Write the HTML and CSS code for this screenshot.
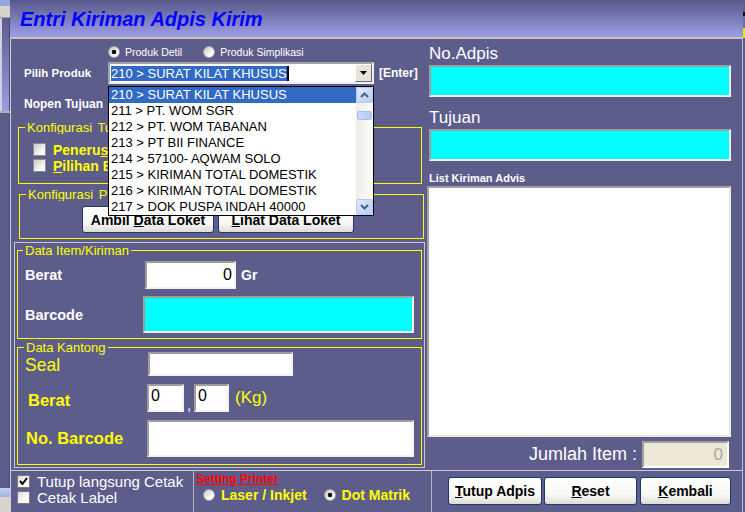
FILE: index.html
```html
<!DOCTYPE html>
<html lang="id">
<head>
<meta charset="utf-8">
<title>Entri Kiriman Adpis Kirim</title>
<link rel="stylesheet" href="styles.css">
</head>
<body>
<div class="screen">
  <div class="strip">
    <div class="strip-top"></div>
    <div class="strip-title"></div>
    <div class="strip-mid"></div>
    <div class="strip-task"></div>
    <div class="strip-bottom"></div>
  </div>
  <div class="window">
    <header class="titlebar"><h1 class="title">Entri Kiriman Adpis Kirim</h1></header>
    <div class="body">
      <div class="left">
        <div class="radio-row">
          <span class="radio on"></span><span class="radio-lbl">Produk Detil</span>
          <span class="radio second"></span><span class="radio-lbl">Produk Simplikasi</span>
        </div>
        <div class="produk-row">
          <span class="lbl">Pilih Produk</span>
          <div class="combo">
            <div class="combo-text"><span class="combo-sel">210 &gt; SURAT KILAT KHUSUS</span><span class="caret"></span></div>
            <div class="combo-btn"><svg width="7" height="4" viewBox="0 0 7 4"><polygon points="0,0 7,0 3.5,4" fill="#000"/></svg></div>
            <div class="droplist">
              <div class="dl-items">
                <div class="dl-item sel">210 &gt; SURAT KILAT KHUSUS</div>
                <div class="dl-item">211 &gt; PT. WOM SGR</div>
                <div class="dl-item">212 &gt; PT. WOM TABANAN</div>
                <div class="dl-item">213 &gt; PT BII FINANCE</div>
                <div class="dl-item">214 &gt; 57100- AQWAM SOLO</div>
                <div class="dl-item">215 &gt; KIRIMAN TOTAL DOMESTIK</div>
                <div class="dl-item">216 &gt; KIRIMAN TOTAL DOMESTIK</div>
                <div class="dl-item">217 &gt; DOK PUSPA INDAH 40000</div>
              </div>
              <div class="dl-scroll">
                <div class="sb-btn"><svg width="9" height="6" viewBox="0 0 9 6"><polyline points="1,5 4.5,1.5 8,5" fill="none" stroke="#4d6185" stroke-width="2"/></svg></div>
                <div class="sb-track"><div class="sb-thumb"></div></div>
                <div class="sb-btn"><svg width="9" height="6" viewBox="0 0 9 6"><polyline points="1,1 4.5,4.5 8,1" fill="none" stroke="#4d6185" stroke-width="2"/></svg></div>
              </div>
            </div>
          </div>
          <span class="enter">[Enter]</span>
        </div>
        <div class="nopen-row"><span class="lbl nopen">Nopen Tujuan</span></div>
        <fieldset class="frame konf-t">
          <legend class="lg-konf">Konfigurasi Tujuan</legend>
          <div class="chk-row"><span class="chk"></span><span class="chk-lbl">Peneru<u>s</u>an</span></div>
          <div class="chk-row"><span class="chk"></span><span class="chk-lbl"><u>P</u>ilihan Barang</span></div>
        </fieldset>
        <fieldset class="frame konf-p">
          <legend class="lg-konf">Konfigurasi Proses</legend>
          <div class="btn-pair">
            <div class="btn ambil"><span>Ambil <u>D</u>ata Loket</span></div>
            <div class="btn lihat"><span><u>L</u>ihat Data Loket</span></div>
          </div>
        </fieldset>
        <div class="panel">
          <fieldset class="frame item">
            <legend>Data Item/Kiriman</legend>
            <div class="frow">
              <span class="flbl w120">Berat</span>
              <div class="inp berat-item">0</div>
              <span class="gr">Gr</span>
            </div>
            <div class="frow gap7">
              <span class="flbl w118">Barcode</span>
              <div class="inp cyan barcode-item"></div>
            </div>
          </fieldset>
          <fieldset class="frame kantong">
            <legend>Data Kantong</legend>
            <div class="frow seal-row">
              <span class="klbl seal">Seal</span>
              <div class="inp seal-inp"></div>
            </div>
            <div class="frow gap8">
              <span class="klbl kb berat-k">Berat</span>
              <div class="inp kg1">0</div>
              <span class="comma">,</span>
              <div class="inp kg2">0</div>
              <span class="kg">(Kg)</span>
            </div>
            <div class="frow gap8">
              <span class="klbl kb nobar">No. Barcode</span>
              <div class="inp nobar-inp"></div>
            </div>
          </fieldset>
        </div>
      </div>
      <div class="right">
        <div class="big-lbl">No.Adpis</div>
        <div class="inp cyan r-cyan"></div>
        <div class="big-lbl tujuan-lbl">Tujuan</div>
        <div class="inp cyan r-cyan"></div>
        <div class="list-lbl">List Kiriman Advis</div>
        <div class="listbox"></div>
        <div class="jumlah-row">
          <span class="jumlah-lbl">Jumlah Item :</span>
          <div class="jumlah-inp">0</div>
        </div>
      </div>
    </div>
    <div class="bottombar">
      <div class="bb-checks">
        <div class="bchk-row"><span class="bchk"><svg width="11" height="11" viewBox="0 0 11 11"><polyline points="2,5 4.5,8 9,2" fill="none" stroke="#000" stroke-width="2"/></svg></span><span class="bchk-lbl">Tutup langsung Cetak</span></div>
        <div class="bchk-row"><span class="bchk"></span><span class="bchk-lbl">Cetak Label</span></div>
      </div>
      <div class="bb-printer">
        <div class="setting">Setting Printer</div>
        <div class="prow">
          <span class="radio"></span><span class="p-lbl">Laser / Inkjet</span>
          <span class="radio on p-second"></span><span class="p-lbl">Dot Matrik</span>
        </div>
      </div>
      <div class="bb-buttons">
        <div class="btn b1"><span><u>T</u>utup Adpis</span></div>
        <div class="btn b2"><span><u>R</u>eset</span></div>
        <div class="btn b3"><span><u>K</u>embali</span></div>
      </div>
    </div>
  </div>
  <div class="edge"></div>
</div>
</body>
</html>
```

FILE: styles.css
```css
* { box-sizing: border-box; }
html, body { margin: 0; padding: 0; }
body {
  width: 745px; height: 512px; overflow: hidden;
  background: #5d5d8b;
  font-family: "Liberation Sans", Arial, sans-serif;
  color: #fff;
}
.screen { display: flex; width: 745px; height: 512px; }

/* fragment of the window behind, at the far left */
.strip { width: 10px; flex: none; display: flex; flex-direction: column; }
.strip-top { height: 18px; background: linear-gradient(#90a8dc 0 6px, #d6d3cc 6px); border-bottom: 1px solid #9a9a9a; }
.strip-title {
  height: 95px;
  background: linear-gradient(to right, #d0d0e0 0 2px, transparent 2px 9px, #4a4a74 9px),
              linear-gradient(#5c5c8c, #9c9ce6);
  border-bottom: 2px solid #b4b0a8;
}
.strip-mid { flex: 1; background: linear-gradient(to right, #5d5d8b 0 9px, #4e4e78 9px); }
.strip-task { height: 9px; background: linear-gradient(#c4d2ee, #9fb4e2); }
.strip-bottom { height: 15px; background: #d8d5ce; }

.window { width: 733px; flex: none; display: flex; flex-direction: column; }
.edge {
  width: 2px; flex: none;
  background: linear-gradient(#5d5d8b 0 12px, #111 12px 16px, #6c6ca0 16px 28px, #e8e800 28px 38px, #5d5d8b 38px);
}
.titlebar {
  height: 39px; flex: none;
  padding: 9px 0 0 10px;
  background: linear-gradient(#58588a, #9e9ee8);
  border-bottom: 2px solid #c8c4bb;
}
.title { margin: 0; font: italic bold 20px/20px "Liberation Sans", Arial, sans-serif; color: #0000ff; }

.body {
  height: 431px; flex: none; display: flex;
  border-left: 1px solid #cfcfdc; border-right: 1px solid #bdbdcc;
}
.left { width: 414px; flex: none; padding-top: 7px; }
.right { flex: 1; padding: 6px 0 0 4px; }

/* radios */
.radio-row { display: flex; align-items: center; height: 12px; padding-left: 97px; }
.radio {
  width: 12px; height: 12px; flex: none; border-radius: 50%;
  border: 1px solid #a4a4a4;
  background: linear-gradient(135deg, #c9c9c3, #fff 75%);
}
.radio.on {
  background: radial-gradient(circle at 50% 50%, #111 0 2px, transparent 2.6px), linear-gradient(135deg, #c9c9c3, #fff 75%);
}
.radio-lbl { font-size: 10.5px; margin-left: 5px; color: #fff; white-space: nowrap; }
.radio.second { margin-left: 21px; }

/* product row */
.produk-row { display: flex; align-items: center; height: 22px; margin-top: 4px; }
.lbl { width: 97px; flex: none; padding-left: 13px; font-weight: bold; font-size: 11.5px; white-space: nowrap; }
.lbl.nopen { font-size: 12px; }
.combo {
  position: relative; width: 266px; height: 22px; flex: none; display: flex;
  border: 2px solid; border-color: #a3a3a3 #efefef #efefef #a3a3a3;
  background: #fff;
}
.combo-text { flex: 1; display: flex; align-items: center; padding-left: 1px; }
.combo-sel { background: #316ac5; color: #fff; font-size: 13px; line-height: 15px; white-space: nowrap; }
.caret { width: 2px; height: 15px; background: #000; }
.combo-btn {
  width: 17px; height: 18px; flex: none;
  background: #e6e3da;
  border: 1px solid; border-color: #fff #6e6c64 #6e6c64 #fff;
  display: flex; align-items: center; justify-content: center;
}
.enter { margin-left: 5px; font-weight: bold; font-size: 12px; white-space: nowrap; }

.droplist {
  position: absolute; left: -2px; top: 22px; z-index: 10;
  width: 266px; height: 130px;
  border: 1px solid #000; background: #fff;
  display: flex;
}
.dl-items { flex: 1; }
.dl-item { height: 16px; line-height: 16px; font-size: 13px; color: #000; padding-left: 2px; white-space: nowrap; }
.dl-item.sel { background: #316ac5; color: #fff; }
.dl-scroll {
  width: 17px; flex: none; display: flex; flex-direction: column;
  background: linear-gradient(to right, #eeede6, #fdfdfb);
}
.sb-btn {
  height: 16px; flex: none;
  border: 1px solid #b5c8f4; border-radius: 2px;
  background: linear-gradient(135deg, #e2eafd, #b7cbf5);
  display: flex; align-items: center; justify-content: center;
}
.sb-track { flex: 1; padding-top: 8px; }
.sb-thumb {
  height: 9px; margin: 0 1px;
  border: 1px solid #a8bdf0; border-radius: 2px;
  background: linear-gradient(to right, #cbd9fb, #b5cbf8);
}

.nopen-row { display: flex; align-items: center; height: 20px; margin-top: 10px; }

/* frames (content inset is on the children so the legend stays at the frame's left) */
.frame { margin: 0; padding: 0; border: 1px solid #ffff00; min-width: 0; }
.frame legend {
  padding: 0 2px; margin-left: 5px;
  font-size: 13px; line-height: 13px; color: #ffff00; white-space: nowrap;
}
/* the parts of these captions that the open list covers are clipped at its left edge */
.frame .lg-konf { margin-left: 6px; padding-right: 0; word-spacing: 2px; max-width: 83px; overflow: hidden; }
.konf-t { margin: 7px 0 0 7px; width: 404px; padding: 9px 0 11px 0; }
.konf-t .chk-row { margin-left: 14px; }
.konf-p { margin: 4px 0 0 8px; width: 405px; padding: 5px 0 5px 0; }
.konf-p .lg-konf { max-width: 82px; }
.konf-p .btn-pair { margin-left: 62px; }

.chk-row { display: flex; align-items: center; height: 13px; }
.chk-row + .chk-row { margin-top: 3px; }
.chk {
  width: 13px; height: 13px; flex: none;
  border: 1px solid #8d8d8d;
  background: linear-gradient(135deg, #c9c9c5, #fff 80%);
}
.chk-lbl {
  margin-left: 7px; font-weight: bold; font-size: 14px; color: #ffff00; white-space: nowrap;
  max-width: 55px; overflow: hidden;
}

.btn-pair { display: flex; gap: 4px; }
.btn {
  height: 27px; flex: none;
  border: 1px solid #1b3b6e; border-radius: 3px;
  background: linear-gradient(#ffffff, #f7f7f4 65%, #dedcd4);
  font-weight: bold; font-size: 14px; color: #000;
  display: flex; align-items: center; justify-content: center; white-space: nowrap;
}
.ambil { width: 132px; }
.lihat { width: 136px; }

/* data panel */
.panel {
  margin: 3px 0 0 3px; width: 411px;
  border: 1px solid #c6c6d0;
  padding: 1px 0 2px 2px;
}
.item { width: 405px; padding: 4px 0 5px 0; }
.kantong { width: 405px; margin-top: 2px; padding: 0 0 7px 0; }
.kantong legend { margin-left: 6px; }
.item .frow, .kantong .frow { margin-left: 7px; }

.frow { display: flex; align-items: center; }
.gap7 { margin-top: 7px; }
.gap8 { margin-top: 8px; }
.flbl { flex: none; font-weight: bold; font-size: 14.5px; white-space: nowrap; }
.w120 { width: 120px; }
.w118 { width: 118px; }
.inp {
  flex: none; background: #fff;
  border: 2px solid; border-color: #9e9e9e #f2f2f2 #f2f2f2 #9e9e9e;
  color: #000;
}
.cyan { background: #00ffff; }
.berat-item {
  width: 91px; height: 28px;
  display: flex; align-items: center; justify-content: flex-end;
  padding-right: 2px; font-size: 16px;
}
.gr { margin-left: 5px; font-weight: bold; font-size: 14px; }
.barcode-item { width: 271px; height: 37px; }

.kantong .seal-row { margin-top: -3px; }
.klbl { flex: none; color: #ffff00; white-space: nowrap; align-self: stretch; display: flex; align-items: center; }
.seal { width: 123px; font-size: 17.5px; padding-top: 4px; }
.kb { font-weight: bold; font-size: 16.5px; }
.berat-k { width: 122px; padding-left: 3px; padding-top: 4px; }
.nobar { width: 122px; padding-left: 1px; }
.seal-inp { width: 145px; height: 24px; }
.kg1, .kg2 { height: 28px; font-size: 16px; line-height: 16px; padding: 2px 0 0 2px; }
.kg1 { width: 37px; }
.kg2 { width: 35px; }
.comma { width: 10px; text-align: center; align-self: flex-end; font-size: 15px; line-height: 15px; color: #fff; }
.kg { margin-left: 6px; font-size: 17px; color: #ffff00; }
.nobar-inp { width: 267px; height: 37px; }

/* right */
.big-lbl { font-size: 17px; line-height: 17px; }
.tujuan-lbl { margin-top: 12px; }
.r-cyan { width: 302px; height: 32px; margin-top: 3px; }
.list-lbl { font-size: 11px; line-height: 11px; font-weight: bold; margin-top: 12px; }
.listbox {
  margin: 2px 0 0 -2px; width: 304px; height: 251px;
  background: #fff;
  border: 2px solid; border-color: #a0a0a0 #ebe8dc #ebe8dc #a0a0a0;
}
.jumlah-row {
  display: flex; align-items: center; justify-content: flex-end;
  height: 27px; margin-top: 4px; padding-right: 13px;
}
.jumlah-lbl { font-size: 18px; margin-right: 5px; white-space: nowrap; }
.jumlah-inp {
  width: 87px; height: 27px; flex: none;
  background: #ece9d8;
  border: 2px solid; border-color: #a2a096 #fff #fff #a2a096;
  color: #aca899; font-size: 17px;
  display: flex; align-items: center; justify-content: flex-end; padding-right: 4px;
}

/* bottom bar */
.bottombar {
  height: 42px; flex: none; display: flex;
  border-top: 1px solid #c8c8d4;
  border-left: 1px solid #cfcfdc; border-right: 1px solid #bdbdcc;
}
.bb-checks { width: 183px; flex: none; border-right: 1px solid #b4b4c4; padding: 4px 0 0 6px; }
.bb-printer { width: 238px; flex: none; border-right: 1px solid #b4b4c4; padding: 2px 0 0 2px; }
.bb-buttons { flex: 1; display: flex; padding: 6px 0 0 16px; }

.bchk-row { display: flex; align-items: center; height: 13px; }
.bchk-row + .bchk-row { margin-top: 3px; }
.bchk {
  width: 13px; height: 13px; flex: none;
  border: 1px solid #7a7a7a;
  background: linear-gradient(135deg, #dcdcd8, #fff 70%);
  display: flex; align-items: center; justify-content: center;
}
.bchk-lbl { margin-left: 7px; font-size: 15px; color: #fff; white-space: nowrap; }

.setting { font-weight: bold; font-size: 12px; line-height: 13px; color: #ff0000; text-decoration: underline; white-space: nowrap; }
.prow { display: flex; align-items: center; height: 12px; margin-top: 3px; padding-left: 7px; }
.p-lbl { margin-left: 6px; font-weight: bold; font-size: 14px; color: #ffff00; white-space: nowrap; }
.p-second { margin-left: 17px; }

.bb-buttons .btn { height: 28px; }
.b1 { width: 94px; }
.b2 { width: 93px; margin-left: 2px; }
.b3 { width: 91px; margin-left: 3px; }
```
